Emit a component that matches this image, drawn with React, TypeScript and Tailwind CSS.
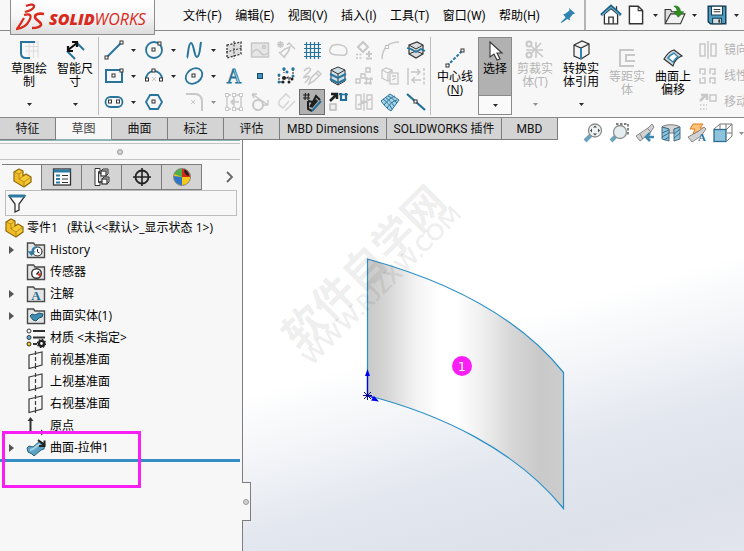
import type { ReactNode } from "react";

const BLUE = "#27759c";
const DARK = "#333333";
const DIM = "#c8c8c8";

function Icon({ children, size = 20 }: { children: ReactNode; size?: number }) {
  return (
    <svg width={size} height={size} viewBox="0 0 20 20" fill="none" stroke={DARK} className="shrink-0" aria-hidden="true">
      {children}
    </svg>
  );
}

function Sq({ x, y, c = DARK, f = "#ffffff" }: { x: number; y: number; c?: string; f?: string }) {
  return <rect x={x - 1.5} y={y - 1.5} width="3" height="3" fill={f} stroke={c} strokeWidth="1" />;
}

function Caret({ dim = false }: { dim?: boolean }) {
  return (
    <svg width="5" height="3" viewBox="0 0 5 3" className="shrink-0" aria-hidden="true">
      <path d="M0 0h5L2.500 3z" fill={dim ? "#8f8f8f" : "#2b2b2b"} />
    </svg>
  );
}

const sketchTools: { name: string; art: ReactNode; drop?: boolean }[][] = [
  [
    { name: "直线", drop: true, art: <><path d="M2 18 18 2" stroke={BLUE} strokeWidth="2" /><Sq x={2.500} y={17.500} /><Sq x={17.500} y={2.500} /></> },
    { name: "圆", drop: true, art: <><circle cx="10" cy="10" r="8" stroke={BLUE} strokeWidth="1.800" /><Sq x={9.500} y={9.500} /><Sq x={15.500} y={3.500} /></> },
    { name: "样条曲线", drop: true, art: <path d="M3 18C4 18 4 3 7 3s3 14 6 14 3-10 4-15" stroke={BLUE} strokeWidth="2" /> },
    { name: "基准面", art: <><path d="M3 5 17 2v12L3 18z" fill="#dedede" strokeDasharray="2 1.500" strokeWidth="1.300" /><path d="M10 1v18M2 12l16-4" strokeDasharray="2 1.500" /></> },
    { name: "草图图片", art: <g stroke={DIM} strokeWidth="1.500"><rect x="1.500" y="3" width="17" height="14" fill="#e6e6e6" /><path d="M2 13c4-5 6-4 8-1s5 4 8 1" /><circle cx="14" cy="7" r="1.500" /></g> },
    { name: "自动尺寸", art: <g stroke={DIM} strokeWidth="1.500"><path d="M2 2l5 5M7 2 2 7M4.500 1v7M1 4.500h7M11 5l2-2 6 6M4 13l5-4 5-2-2 5-4 5M3 12l6 6" /></g> },
    { name: "网格", art: <path d="M4.500 2v17M8.500 2v17M12.500 2v17M16.500 2v17M2 4.500h17M2 8.500h17M2 12.500h17M2 16.500h17" stroke={BLUE} strokeWidth="1.200" /> },
    { name: "闭合曲线", art: <path d="M4 14C0 12 2 6 6 5s13 0 13 6-5 4-8 4-5 0-7-1z" stroke={DIM} strokeWidth="1.500" /> },
    { name: "修复草图", art: <g stroke={DIM} strokeWidth="2"><path d="M9 2l5 5-5 5-5-5z" /><path d="M2 14.500h6M2 18h7" strokeDasharray="2 1.500" strokeWidth="1.500" /><path d="M12 18.500h6M15 11v6M12 14h6" /></g> },
    { name: "圆弧过渡", art: <g stroke={DIM} strokeWidth="1.500"><path d="M2 19C2 8 9 2 19 2" /><Sq x={7} y={7} c="#bcbcbc" /></g> },
    { name: "曲面切片", art: <><path d="M3 5l8-3 6 3v9l-7 4-7-4z" fill="#d9dcde" strokeWidth="1.200" /><path d="M3 5l7 4 7-4M3 14l7-3 7 3" /><path d="M1 8l4 1 5 3 5-3 4 2" stroke={BLUE} strokeWidth="1.800" /></> },
  ],
  [
    { name: "边角矩形", drop: true, art: <><rect x="2" y="4" width="16" height="12" stroke={BLUE} strokeWidth="2" /><Sq x={9.500} y={9.500} /><Sq x={17.500} y={4.500} /></> },
    { name: "圆心圆弧", drop: true, art: <><path d="M2 13a8 8 0 0 1 16 0" stroke={BLUE} strokeWidth="1.800" /><path d="M8 11l4 4m0-4-4 4" stroke={DIM} /><Sq x={9.500} y={4.500} /><Sq x={3} y={13.500} /><Sq x={17} y={13.500} /></> },
    { name: "椭圆", drop: true, art: <><ellipse cx="10" cy="10" rx="9" ry="7" transform="rotate(-38 10 10)" stroke={BLUE} strokeWidth="1.800" /><Sq x={9.500} y={9.500} /></> },
    { name: "文字", art: <text x="10" y="17" textAnchor="middle" fontSize="20" className="font-['Liberation_Serif',serif]" fill="#e8f3f8" stroke={BLUE} strokeWidth="1">A</text> },
    { name: "点", art: <rect x="7.500" y="7.500" width="5" height="5" fill="#3f93ba" stroke="#174d68" /> },
    { name: "草图阵列", art: <><path d="M3 9v7M8 3v4M17 3v5M4 16h4M8 12l5-1v5M10 12h7" strokeDasharray="2 1" stroke="#222" /><g fill={BLUE} stroke="none"><circle cx="3" cy="9" r="1.500" /><circle cx="8" cy="3" r="1.700" /><circle cx="17" cy="3" r="1.700" /><circle cx="11" cy="6" r="1.500" /><circle cx="17" cy="10" r="1.500" /><circle cx="3" cy="16" r="1.500" /></g><g fill="#222" stroke="none"><circle cx="8" cy="12" r="2" /><circle cx="7" cy="16" r="1.500" /><circle cx="13" cy="16" r="1.500" /><circle cx="16" cy="13" r="1.500" /></g></> },
    { name: "草图绘制笔", art: <g stroke={DIM} strokeWidth="1.500"><path d="M2 5c4-5 9-3 5 1s-8 7-3 5 4 0-1 6" /><path d="M7 18l2-6 7-7 3 3-7 7zM14 7l3 3" /></g> },
    { name: "实体相交", art: <><path d="M3 4 10 1l7 3v11l-7 4-7-4z" fill="#cfdfe7" /><path d="M3 4l7 4 7-4M10 8v11" /><path d="M2 8l8 4 8-4M2 13l8 4 8-4" stroke={BLUE} strokeWidth="2" /></> },
    { name: "线性阵列", art: <g stroke={DIM} strokeWidth="1.500"><rect x="2" y="13" width="4" height="4" /><rect x="7" y="8" width="4" height="4" /><rect x="12" y="2" width="4" height="4" /><path d="M13 11l-1 8M17 11l-1 8M11 13h8M10 17h8" strokeWidth="1.300" /></g> },
    { name: "转换", art: <g stroke={DIM} strokeWidth="1.300"><path d="M2 4l4-2 6 2v9l-4 2-6-3zM2 4l6 3 4-3M8 7v8" /><rect x="10" y="7" width="8" height="11" fill="#f7f7f7" /><path d="M12 10h4M12 14l4-2" /></g> },
    { name: "对齐", art: <g stroke={DIM} strokeWidth="1.500"><path d="M2 2v17" /><path d="M18 2v17" strokeDasharray="3 1.500" /><path d="M5 6h9m-3-3 3 3-3 3M15 14H6m3-3-3 3 3 3" /></g> },
  ],
  [
    { name: "直槽口", drop: true, art: <><rect x="1.500" y="5" width="17" height="10" rx="5" stroke={BLUE} strokeWidth="1.800" /><Sq x={6} y={9.500} /><Sq x={14} y={9.500} /></> },
    { name: "多边形", art: <><path d="M6 3h8l4 7-4 7H6l-4-7z" stroke={BLUE} strokeWidth="1.800" /><Sq x={9.500} y={9.500} /></> },
    { name: "绘制圆角", drop: true, art: <><path d="M2 2h9c4 0 7 3 7 7v10" stroke={DIM} strokeWidth="2" /><path d="M7 8l4 4m0-4-4 4" stroke={DIM} /></> },
    { name: "伸展", art: <g stroke={DIM} strokeWidth="1.400"><path d="M3 3v14M3 17h4M3 3h4M10 3h7v14h-7zM15 10H7m3-3-3 3 3 3" /><Sq x={3} y={3} c={DIM} /><Sq x={3} y={17} c={DIM} /><Sq x={17} y={3} c={DIM} /><Sq x={17} y={17} c={DIM} /><Sq x={10} y={3} c={DIM} /><Sq x={10} y={17} c={DIM} /></g> },
    { name: "相切", art: <g stroke={DIM} strokeWidth="2"><circle cx="8" cy="13" r="5" /><path d="M2 2l16 11M2 2l5 0M2 2l2 4M18 13v-5M18 13h-5" strokeWidth="1.400" /></g> },
    { name: "尺寸标注", art: <g stroke="#d6d6d6" strokeWidth="1.600"><path d="M3 9l7-7 4 4M3 9v4l4 3 6-7M9 19 19 9" /></g> },
    { name: "快速尺寸", art: <><path d="M3.500 1 3 8M6.500 1 6 8M1 3h7M1 6h7" strokeWidth="1.200" stroke="#222" /><path d="M6 9l5 1 3-6 4 4M6 9v8l4 2M11 10l-3 5" strokeWidth="2" stroke="#1f1f1f" /><path d="M9 15l6-7" stroke="#1f1f1f" strokeWidth="3" /><path d="M10 19 19 9" stroke="#236f96" strokeWidth="2" /></> },
    { name: "移动", art: <><path d="M2 9l6-6M3 2h6v5" stroke="#222" strokeWidth="2.500" /><path d="M11 2h2v6h5V2h1" stroke="#236f96" strokeWidth="2.200" /><path d="M11 2.500h9" stroke="#236f96" strokeWidth="1.500" /><rect x="2" y="12" width="6" height="6" stroke="#bdbdbd" strokeWidth="1.500" fill="#eee" /></> },
    { name: "分割", art: <g stroke={DIM} strokeWidth="1.400"><path d="M2 3h5v14H2zM13 3h5v14h-5zM10 1v18M4 13 17 7M7 8l3 4" /></g> },
    { name: "曲面网格", art: <><path d="M1 9 10 2l9 6-8 11C7 17 4 13 1 9z" fill="#a7d2e5" stroke={BLUE} /><path d="M3 7c4 3 7 6 9 10M5 5c4 3 7 6 9 9M8 4c4 2 6 4 9 7M4 13c3-4 6-7 11-9M7 16c3-4 6-7 10-8" stroke={BLUE} /></> },
    { name: "断开", art: <><path d="M1 2 19 18" stroke="#236f96" strokeWidth="2.200" /><Sq x={9.500} y={9.500} /></> },
  ],
];

function SketchGrid() {
  const pressed = "快速尺寸";
  return (
    <div className="flex shrink-0 flex-col">
      {sketchTools.map((row, r) => (
        <div key={r} className="flex h-[26px] items-center">
          {row.map((t, c) => (
            <div key={t.name} className={c < 3 ? "flex w-10 items-center" : "flex items-center"}>
              <button
                aria-label={t.name}
                className={
                  t.name === pressed
                    ? "flex size-[26px] items-center justify-center border border-[#6b6b6b] bg-[#b1b1b1]"
                    : "flex size-[26px] items-center justify-center"
                }
              >
                <Icon>{t.art}</Icon>
              </button>
              {t.drop && (
                <button aria-label={t.name + "选项"} className="flex h-5 w-3 items-center justify-center">
                  <Caret dim={t.name === "绘制圆角"} />
                </button>
              )}
            </div>
          ))}
        </div>
      ))}
    </div>
  );
}

function BigTool({ lines, art, drop, dim }: { lines: ReactNode[]; art: ReactNode; drop?: boolean; dim?: boolean }) {
  return (
    <button className={dim ? "flex h-[78px] w-[46px] shrink-0 flex-col items-center text-[#b4b4b4]" : "flex h-[78px] w-[46px] shrink-0 flex-col items-center text-black"}>
      <span className="flex h-[25px] items-center">
        <Icon>{art}</Icon>
      </span>
      <span className="flex flex-col items-center leading-[13px] whitespace-nowrap">
        {lines.map((l, i) => (
          <span key={i}>{l}</span>
        ))}
      </span>
      {drop && (
        <span className="mt-auto flex h-[21px] items-center">
          <Caret dim={dim} />
        </span>
      )}
    </button>
  );
}

const scissors = (
  <g stroke={DIM} strokeWidth="2">
    <circle cx="4" cy="4" r="2.500" />
    <circle cx="4" cy="15" r="2.500" />
    <path d="M6 6l12 11M6 14 16 3M11 2v16M1 10h17" strokeWidth="1.600" />
  </g>
);

function Logo() {
  return (
    <div className="absolute top-0 left-[10px] flex h-[35px] w-[145px] items-center border border-t-0 border-[#8d8d8d] bg-linear-to-b from-white via-[#f6f6f6] to-[#dcdcdc] pl-[5px] text-[#d9291c]">
      <svg width="30" height="29" viewBox="0 0 30 29" fill="none" stroke="#d9291c" strokeWidth="2.200" className="shrink-0" aria-hidden="true">
        <path d="M10 3c4-2 9-2 8 1-1 2-5 4-9 5" />
        <path d="M8 12c7-2 8 1 5 6-2 4-6 7-12 8 3-4 5-8 7-11" />
        <path d="M28 11c-5-1-9 0-9 3s7 5 6 8c-1 2-5 3-9 3" strokeWidth="2.600" />
      </svg>
      <span className="pt-1 pl-[3px] font-['Open_Sans',sans-serif] text-base leading-4 italic">
        <b className="font-extrabold">SOLID</b>
        <span className="font-normal">WORKS</span>
      </span>
    </div>
  );
}

const menus = [
  ["文件", "F"],
  ["编辑", "E"],
  ["视图", "V"],
  ["插入", "I"],
  ["工具", "T"],
  ["窗口", "W"],
  ["帮助", "H"],
];

function MenuBar() {
  return (
    <header className="relative z-10 flex h-[31px] shrink-0 border-b border-[#8a8a8a] bg-[#f7f7f7] pl-[183px]">
      <Logo />
      <nav className="flex w-[357px] shrink-0 items-center justify-between pt-0.5">
        {menus.map(([label, key]) => (
          <button key={key} className="shrink-0 whitespace-nowrap">
            {label}
            <span className="font-['Roboto',sans-serif]">({key})</span>
          </button>
        ))}
      </nav>
      <button aria-label="固定" className="ml-5 flex items-center">
        <Icon size={16}>
          <path d="M11 1l8 7-3 1-4 5 1 3-4-2-7 5-1-1 6-6-3-4 3-1 5-4z" fill="#2f84b1" stroke="none" />
        </Icon>
      </button>
      <div className="ml-2 flex flex-1 items-center border-l-2 border-[#b5b5b5] pl-3.5">
        <button aria-label="主页" className="mr-[3px]">
          <Icon size={22}>
            <path d="M4 9v9h12V9l-6-5z" fill="#fff" strokeWidth="1.200" />
            <path d="M8 18v-6h4v6M15 2v4" strokeWidth="1.200" />
            <path d="M1 10 10 2l9 8" stroke="#1c5f82" strokeWidth="2.500" />
            <path d="M2 10 10 3l8 7" stroke="#62aed0" strokeWidth="1" />
          </Icon>
        </button>
        <button aria-label="新建">
          <Icon size={22}>
            <path d="M4 2h8l4 4v12H4z" fill="#fff" strokeWidth="1.300" />
            <path d="M12 2v4h4" />
          </Icon>
        </button>
        <button aria-label="新建选项" className="flex h-5 w-[17px] items-center justify-center">
          <Caret />
        </button>
        <button aria-label="打开">
          <Icon size={22}>
            <path d="M1 17V5h5l1 2h7v3" fill="#ddd" />
            <path d="M1 18 6 9h13l-4 9z" fill="#f1f1f1" />
            <path d="M9 2c4-1 6 2 6 5h3l-5 5-4-5h3c0-2-1-4-3-5z" fill="#2f8f1a" stroke="#1d6f19" strokeWidth=".6" />
          </Icon>
        </button>
        <button aria-label="打开选项" className="flex h-5 w-[17px] items-center justify-center">
          <Caret />
        </button>
        <button aria-label="保存" className="ml-[3px]">
          <Icon size={22}>
            <path d="M2 2h16v16H4l-2-2z" fill="#4f9dc2" stroke="#163f56" strokeWidth="1.300" />
            <path d="M5 2h10v8H5z" fill="#fff" stroke="#163f56" />
            <path d="M7 5h6M7 7h6" />
            <path d="M6 13h8v5H6z" fill="#d7dde0" stroke="#163f56" />
            <path d="M12 14v3" strokeWidth="1.500" />
          </Icon>
        </button>
        <button aria-label="保存选项" className="flex h-5 w-4 items-center justify-center">
          <Caret />
        </button>
      </div>
    </header>
  );
}

function SideTools() {
  const g = { stroke: DIM, strokeWidth: 1.500 };
  const rows: [string, ReactNode][] = [
    ["镜向", <g {...g}><path d="M2 4v12h5V4zM18 4v12h-5V4zM10 1v18" /></g>],
    ["线性", <g {...g}><path d="M2 8V3h5v5H4m8 0V3h5v5h-3M4 12h3v5H2v-5m10 5v-5h5v5h-3" /></g>],
    ["移动", <g {...g}><path d="M2 9l6-6M3 3h6v5" strokeWidth="2.500" /><rect x="12" y="3" width="6" height="6" /><path d="M2 13h7M2 17h7" strokeDasharray="1.500 1.500" /></g>],
  ];
  return (
    <div className="ml-0.5 flex flex-col">
      {rows.map(([label, art]) => (
        <button key={label} className="flex h-[26px] items-center gap-1.5 whitespace-nowrap text-[#b4b4b4]">
          <Icon>{art}</Icon>
          {label}
        </button>
      ))}
    </div>
  );
}

function Toolbar() {
  return (
    <div className="flex h-[87px] shrink-0 overflow-hidden border-b border-[#8a8a8a] bg-[#f7f7f7] pt-1.5 pl-1.5">
      <BigTool
        lines={["草图绘", "制"]}
        drop
        art={<><path d="M6 2h14M6 6.500h14M6 11h14M10 2v16M14.500 2v16M19 2v16" stroke="#dcdcdc" /><path d="M16 2H2v11c0 3 2 5 5 5h4" stroke={BLUE} strokeWidth="2" /></>}
      />
      <BigTool
        lines={["智能尺", "寸"]}
        drop
        art={<><path d="M2 11l8 8M11 2l8 8" stroke={BLUE} strokeWidth="2" /><path d="M3 10l9-7M3 6v5h5M7 2h5v5" stroke="#111" strokeWidth="2.200" /></>}
      />
      <div className="mr-0.5 h-[78px] w-px shrink-0 bg-[#bdbdbd]" />
      <SketchGrid />
      <div className="mr-px ml-px h-[78px] w-px shrink-0 bg-[#bdbdbd]" />
      <div className="flex pt-2">
        <BigTool
          lines={["中心线", <>(<u>N</u>)</>]}
          art={<><path d="M2 18 18 2" stroke={BLUE} strokeWidth="2" strokeDasharray="3 1.500" /><Sq x={2.500} y={17.500} /><Sq x={17.500} y={2.500} /></>}
        />
      </div>
      <button className="flex h-[78px] w-[34px] shrink-0 flex-col border border-[#8a8a8a]">
        <span className="flex h-[58px] w-full flex-col items-center border-b border-[#8a8a8a] bg-[#b1b1b1] pt-[3px]">
          <Icon>
            <path d="M5 1v15l4-3 3 6 3-1-3-6h5z" fill="#fff" strokeWidth="1.100" />
          </Icon>
          <span className="leading-4">选择</span>
        </span>
        <span className="flex h-[18px] w-full items-center justify-center bg-[#fafafa]">
          <Caret />
        </span>
      </button>
      <BigTool lines={["剪裁实", "体(T)"]} dim drop art={scissors} />
      <BigTool
        lines={["转换实", "体引用"]}
        drop
        art={<><path d="M3 5 11 1l7 3v10l-8 5-7-3z" fill="#f4f4f4" strokeWidth="1.200" /><path d="M3 5l7 3 8-4" strokeWidth="1.200" /><path d="M10 8v11" stroke="#2f84b1" strokeWidth="2" /></>}
      />
      <div className="flex pt-2">
        <BigTool lines={["等距实", "体"]} dim art={<path d="M17 2H3v16h14M18 7H9v6h9" stroke={DIM} strokeWidth="2" />} />
        <BigTool
          lines={["曲面上", "偏移"]}
          art={<><path d="M1 11c3-5 6-8 10-9l8 6c-4 1-8 5-9 10z" fill="#cfd8dd" stroke="#333" strokeWidth="1.200" /><path d="M5 10c2-3 4-4 6-5l4 4c-2 1-4 3-5 5z" fill="#fff" stroke="#2f84b1" strokeWidth="1.400" /></>}
        />
      </div>
      <SideTools />
    </div>
  );
}

const commandTabs: [string, string][] = [
  ["特征", "w-14"],
  ["草图", "w-14"],
  ["曲面", "w-14"],
  ["标注", "w-14"],
  ["评估", "w-14"],
  ["MBD Dimensions", "w-[107px]"],
  ["SOLIDWORKS 插件", "w-[115px]"],
  ["MBD", "w-14"],
];

const viewTools: [string, ReactNode][] = [
  ["整屏显示全图", <><path d="M2 18l6-6" stroke="#6ba3bd" strokeWidth="4" /><circle cx="12" cy="7.500" r="6.500" fill="#eef2f4" stroke="#8e8e8e" strokeWidth="1.300" /><path d="M12 2.500l2 2h-4zM12 12.500l2-2h-4zM7 7.500l2-2v4zM17 7.500l-2-2v4z" fill="#444" stroke="none" /></>],
  ["局部放大", <><path d="M7 1h12v12" stroke="#555" strokeDasharray="2.500 1.500" strokeWidth="1.400" /><path d="M2 18l5-5" stroke="#6ba3bd" strokeWidth="4" /><circle cx="11" cy="9" r="6.500" fill="#e6edf1" stroke="#8e8e8e" strokeWidth="1.300" /></>],
  ["上一视图", <><path d="M1 13 13 5l4-4 2 3-4 6L5 18z" fill="#d2d2d2" stroke="#888" /><path d="M5 11l3 5M12 5l4 4" stroke="#888" /><path d="M19 14h-8m4-4-4 4 4 4" stroke="#3f87ab" strokeWidth="2.500" /></>],
  ["剖面视图", <><path d="M1 4c3-3 14-3 18 0l-6 2v4H8V6z" fill="#d6d6d6" stroke="#777" /><path d="M1 4l7 2v12l-7-2zM13 6l6-2v12l-6 2z" fill="#8fc3dd" stroke="#4c6d7c" /><path d="M1 10l7-3M1 14l7-4M3 17l5-3M13 11l6-5M13 15l6-5" stroke="#2f6f8f" /></>],
  ["隐藏项目", <><path d="M6 1h10l-3 4h5L6 11l2-5H3z" fill="#fbc27a" stroke="#e27a1d" /><path d="M1 14 12 8l5-4 2 2-5 7-9 6z" fill="#d2d2d2" stroke="#888" /><text x="15" y="18" textAnchor="middle" fontSize="11" className="font-['Liberation_Serif',serif] font-bold" fill="#2c7499" stroke="none">A</text></>],
  ["显示样式", <><path d="M1 6l6-5h12v12l-5 5M7 1v6m6 0 6-6M13 1v5m1 4h5" stroke="#777" /><rect x="1" y="6.500" width="12" height="12" fill="#8fc3dd" stroke="#2c6d8f" strokeWidth="1.300" /></>],
];

function CommandTabs() {
  return (
    <div className="relative z-20 flex h-[22px] shrink-0 items-start bg-white">
      <div role="tablist" className="flex h-full shrink-0 font-['Roboto','Noto_Sans_CJK_SC',sans-serif]">
        {commandTabs.map(([label, width]) => (
          <button
            key={label}
            role="tab"
            aria-selected={label === "草图"}
            className={
              width +
              " flex items-center justify-center border-r border-b whitespace-nowrap " +
              (label === "草图" ? "border-r-[#8a8a8a] border-b-[#8db5b5] bg-[#f7f7f7] text-[#444]" : "border-[#7d7d7d] bg-[#d4d4d4] text-[#111]")
            }
          >
            {label}
          </button>
        ))}
      </div>
      <div className="ml-[25px] flex gap-[6px] pt-[5px]">
        {viewTools.map(([name, art]) => (
          <button key={name} aria-label={name}>
            <Icon>{art}</Icon>
          </button>
        ))}
        <button aria-label="更多" className="flex h-5 items-center">
          <Caret dim />
        </button>
      </div>
    </div>
  );
}

const partArt = (
  <>
    <path d="M2 4l5-3 4 2v5l3-2 5 3v5l-7 5L2 13z" fill="#f7ca35" stroke="#8a6508" strokeWidth="1.200" strokeLinejoin="round" />
    <path d="M3 5l4 2v5l5 3v3L3 13z" fill="#f1bb22" stroke="none" />
    <path d="M2 4l5 2v5l5 3v5M7 6l4-3M12 14l7-5M7 11l4-3" stroke="#a87c10" strokeWidth=".8" />
  </>
);

const managerTabs: [string, ReactNode][] = [
  ["特征管理器", partArt],
  ["属性管理器", <><rect x="1.500" y="2" width="17" height="16" fill="#fff" strokeWidth="1.300" /><path d="M1.500 4h17" stroke="#2c7ba2" strokeWidth="3" /><path d="M4 8.500h4M4 12h4M4 15.500h4" stroke="#2c7ba2" strokeWidth="2" /><path d="M10 8.500h6M10 12h6M10 15.500h6" /></>],
  ["配置管理器", <><path d="M6 6h4M6 15h4" strokeWidth="1.300" /><path d="M3 1.500h5v3H6.500v11H8v3H3z" fill="#fff" /><rect x="9" y="4" width="5" height="5" fill="#fff" strokeWidth="1.200" /><rect x="10" y="12" width="5" height="5" fill="#fff" strokeWidth="1.200" /><path d="M9 4l2-2h5v5l-2 2M10 12l2-2h5v5l-2 2" /></>],
  ["尺寸管理器", <><circle cx="10" cy="10" r="6.500" stroke="#222" strokeWidth="1.800" /><path d="M10 1v18M1 10h18" stroke="#222" strokeWidth="1.600" /></>],
  ["显示管理器", <><circle cx="10" cy="10" r="8.500" fill="#f5c816" stroke="none" /><path d="M10 10 2 7a8.500 8.500 0 0 1 8-5.500z" fill="#4fb04b" stroke="none" /><path d="M10 10V1.500A8.500 8.500 0 0 1 18.500 10z" fill="#d8261c" stroke="none" /><path d="M10 10v8.500A8.500 8.500 0 0 1 1.700 9z" fill="#2d76c9" stroke="none" /><path d="M12 2c3 1 5 4 5 7-3 0-5-3-5-7z" fill="#222" stroke="none" /><circle cx="10" cy="10" r="8.500" stroke="#888" /></>],
];

const folder = <path d="M1.500 17.500V3h6l1.500 2h9.500v12.500z" fill="#e6e6e6" stroke="#4a4a4a" strokeWidth="1.400" />;
const plane = <path d="M3 5 16 2v13L3 18.500zM9.500 1v4m0 2v4m0 2v6" stroke="#3b3b3b" strokeWidth="1.200" />;

const tree: { label: string; art: ReactNode; expand?: boolean }[] = [
  { label: "History", expand: true, art: <>{folder}<circle cx="11.500" cy="11.500" r="4.500" fill="#fff" strokeWidth="1.200" /><path d="M11.500 9v3l2 1" /><path d="M3 12h5L5.500 15zM6 12c0-3 2-5 5-5" fill="#2c7ba2" stroke="#2c7ba2" strokeWidth="1.300" /></> },
  { label: "传感器", art: <>{folder}<circle cx="10.500" cy="11.500" r="4.800" fill="#fff" strokeWidth="1.400" /><path d="M10.500 12.500l2.500-3" stroke="#222" strokeWidth="1.400" /><path d="M11 12l4-1-1 4z" fill="#e0311f" stroke="none" /></> },
  { label: "注解", expand: true, art: <>{folder}<text x="10" y="16" textAnchor="middle" fontSize="13" className="font-['Liberation_Serif',serif] font-bold" fill="#1f6a91" stroke="none">A</text></> },
  { label: "曲面实体(1)", expand: true, art: <>{folder}<path d="M4 10l2-2 3 1 4-2 4 1-1 3-3 1-3 3-3-1z" fill="#3f8bb0" stroke="#21566f" /></> },
  { label: "材质 <未指定>", art: <><g strokeWidth="1"><circle cx="3" cy="3" r="2" fill="#fff" /><circle cx="3" cy="9.500" r="2" fill="#59b4de" /><circle cx="3" cy="16" r="2" fill="#f4c81f" /></g><path d="M7 3h12M7 9.500h12M7 16h4" strokeWidth="1.800" /><circle cx="15.500" cy="15.500" r="2.600" stroke="#222" strokeWidth="2.400" /><circle cx="15.500" cy="15.500" r="4" stroke="#222" strokeWidth="1.400" strokeDasharray="1.600 1.500" /></> },
  { label: "前视基准面", art: plane },
  { label: "上视基准面", art: plane },
  { label: "右视基准面", art: plane },
  { label: "原点", art: <><path d="M4.500 3v13.500H17" strokeWidth="2" /><path d="M1.500 5 4.500 1l3 4zM15 13.500l4 3-4 3z" fill={DARK} stroke="none" /></> },
  { label: "曲面-拉伸1", expand: true, art: <><path d="M1 10l2-2 4 1 7-6 5 3-1 5-3 1-7 6-2-2-4-2z" fill="#5da3c4" stroke="#28607c" /><path d="M4 12c4 0 5-4 10-6" stroke="#a9d3e6" strokeWidth="2" /><path d="M12 2l6 5M18.500 2.500V8H13" stroke="#222" strokeWidth="2" /></> },
];

function FeaturePanel() {
  return (
    <aside className="relative z-10 flex w-[243px] shrink-0 flex-col border-r border-r-[#7d7d7d] bg-[#f7f7f7]">
      <div className="mr-0.5 h-1 border-t border-b border-t-[#8db5b5] border-b-[#c4c4c4]" />
      <div className="mr-0.5 flex h-4 items-center justify-center border-b border-[#c4c4c4]">
        <span className="size-[6px] rounded-full border border-[#9a9a9a] bg-[#d0d0d0]" />
      </div>
      <div className="mt-1 mr-0.5 flex h-[26px] items-center">
        <div role="tablist" className="ml-0.5 flex h-full border-t border-[#7d7d7d]">
          {managerTabs.map(([name, art], i) => (
            <button
              key={name}
              role="tab"
              aria-label={name}
              aria-selected={i === 0}
              className={
                i === 0
                  ? "flex w-10 items-center justify-center border-r border-[#7d7d7d]"
                  : "flex w-10 items-center justify-center border-r border-b border-[#7d7d7d] bg-[#d4d4d4]"
              }
            >
              <Icon>{art}</Icon>
            </button>
          ))}
        </div>
        <button aria-label="更多选项卡" className="ml-[22px]">
          <svg width="12" height="12" viewBox="0 0 12 12" fill="none" stroke="#666" strokeWidth="1.800" aria-hidden="true">
            <path d="M3 1l5 5-5 5" />
          </svg>
        </button>
      </div>
      <div className="mx-[5px] flex h-[26px] shrink-0 items-center border border-[#bdbdbd] pl-px">
        <Icon>
          <path d="M2 3h16l-6 8v6l-4 2v-8z" fill="#fff" strokeWidth="1.300" />
          <path d="M2 3h16" stroke="#2c7ba2" strokeWidth="3" />
        </Icon>
        <input aria-label="筛选" className="h-5 min-w-0 flex-1 bg-transparent px-1 outline-none" />
      </div>
      <button className="flex h-[23px] shrink-0 items-center pl-1 text-left whitespace-pre">
        <Icon>{partArt}</Icon>
        <span className="pl-[3px]">{"零件1   (默认<<默认>_显示状态 1>)"}</span>
      </button>
      <ul>
        {tree.map((n) => (
          <li key={n.label} className="flex h-[22px] items-center pl-[9px]">
            <span className="w-[17px] shrink-0">
              {n.expand && (
                <button aria-label={"展开 " + n.label} className="flex h-3 w-1.5 items-center">
                  <svg width="5" height="8" viewBox="0 0 5 8" aria-hidden="true">
                    <path d="M0 0l5 4-5 4z" fill="#555" />
                  </svg>
                </button>
              )}
            </span>
            <button className="flex items-center gap-1 whitespace-nowrap">
              <Icon>{n.art}</Icon>
              {n.label}
            </button>
          </li>
        ))}
      </ul>
      <div className="mr-0.5 h-[3px] shrink-0 bg-[#368cc4]" />
      <div className="absolute top-[291px] left-0.5 h-[57px] w-[139px] border-3 border-[#f81ef4]" />
      <button
        aria-label="折叠面板"
        className="absolute top-[342px] -right-[9px] flex h-[39px] w-[9px] items-center justify-center border border-l-0 border-[#7d7d7d] bg-[#f7f7f7]"
      >
        <span className="size-[6px] shrink-0 rounded-full border border-[#9a9a9a] bg-[#d0d0d0]" />
      </button>
    </aside>
  );
}

function Viewport() {
  return (
    <main className="relative min-w-0 flex-1 overflow-hidden bg-[linear-gradient(164deg,#ffffff_46%,#f3f5f8_58%,#e3e7ef_72%,#dde1ea_88%,#e2e5ee_100%)]">
      <svg className="block size-full" aria-label="曲面-拉伸1 模型">
        <defs>
          <linearGradient id="sheet">
            <stop offset="0" stopColor="#c9c9c9" />
            <stop offset=".1" stopColor="#d6d6d6" />
            <stop offset=".25" stopColor="#f3f3f3" />
            <stop offset=".37" stopColor="#ffffff" />
            <stop offset=".45" stopColor="#ffffff" />
            <stop offset=".57" stopColor="#f1f1f1" />
            <stop offset=".75" stopColor="#d5d5d5" />
            <stop offset=".88" stopColor="#c9c9c9" />
            <stop offset="1" stopColor="#cdcdcd" />
          </linearGradient>
        </defs>
        <path
          d="M124.500 119C197 139 272 172 320.500 232.500V368.500C272 309 197 274 124.500 255.500Z"
          fill="url(#sheet)"
          stroke="#2b8fc6"
          strokeWidth="1.200"
        />
        <g transform="rotate(-45 121 128)" textAnchor="middle" fill="#000000" fillOpacity=".08">
          <text x="121" y="143" fontSize="42" className="font-['Noto_Sans_CJK_SC',sans-serif] font-bold">
            软件自学网
          </text>
          <text x="121" y="161" fontSize="23" className="font-['Lato',sans-serif] font-bold">
            WWW.RJZXW.COM
          </text>
        </g>
        <g stroke="#0000f0" fill="#0000f0">
          <path d="M124.500 255v-20M124.500 255l8 4" strokeWidth="1.300" fill="none" />
          <path d="M124.500 229l2.500 7h-5zM136 261.500l-8-1 3-4.500z" stroke="none" />
          <path d="M124.500 251v9M120 255.500h9M121 252l7 7M128 252l-7 7" strokeWidth="1" stroke="#0a0a90" />
        </g>
      </svg>
      <span className="absolute top-[216px] left-[209px] flex size-5 items-center justify-center rounded-full bg-[#f81ef4] font-['DejaVu_Sans',sans-serif] text-[13px] leading-none text-white">
        1
      </span>
    </main>
  );
}

export default function App() {
  return (
    <div className="flex h-screen flex-col overflow-hidden bg-white font-['Open_Sans','Noto_Sans_CJK_SC',sans-serif] text-xs text-black">
      <MenuBar />
      <Toolbar />
      <CommandTabs />
      <div className="flex min-h-0 flex-1">
        <FeaturePanel />
        <Viewport />
      </div>
    </div>
  );
}
